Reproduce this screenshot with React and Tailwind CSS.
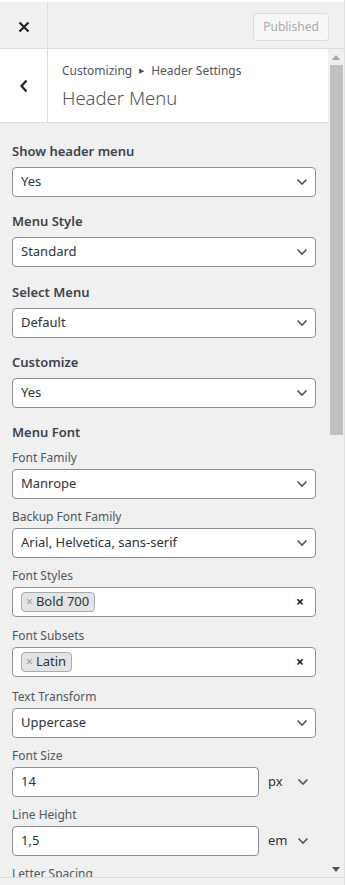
import React from "react";

const font = { fontFamily: '"Noto Sans", "Open Sans", sans-serif' };

function Chevron() {
  return (
    <svg width="12" height="8" viewBox="0 0 12 8" className="shrink-0">
      <path d="M1.5 1.5 L6 6 L10.5 1.5" fill="none" stroke="#50575e" strokeWidth="1.6" />
    </svg>
  );
}

function Select({ value }) {
  return (
    <div className="h-[30px] w-[304px] bg-white border border-[#8c8f94] rounded-[4px] flex items-center pl-[8px] pr-[7px] justify-between">
      <span className="text-[13px] text-[#2c3338]">{value}</span>
      <Chevron />
    </div>
  );
}

function BigLabel({ children, mb = "mb-[6px]" }) {
  return <div className={`h-[20px] leading-[20px] text-[13px] font-semibold text-[#3c434a] ${mb}`}>{children}</div>;
}

function SmallLabel({ children }) {
  return <div className="h-[17px] leading-[17px] text-[12px] text-[#50575e] mb-[3px]">{children}</div>;
}

function Multi({ tag }) {
  return (
    <div className="h-[30px] w-[304px] bg-white border border-[#8c8f94] rounded-[4px] flex items-center pl-[8px] pr-[11px] justify-between">
      <span className="h-[20px] flex items-center bg-[#e4e4e4] border border-[#aaaaaa] rounded-[4px] pl-[4px] pr-[5px] text-[13px] text-[#2c3338]">
        <span className="text-[#999] text-[12px] mr-[3px] leading-none">×</span>
        {tag}
      </span>
      <span className="text-[14px] font-bold text-[#222] leading-none">×</span>
    </div>
  );
}

function Unit({ value, unit }) {
  return (
    <div className="flex items-center">
      <div className="h-[30px] w-[247px] bg-white border border-[#8c8f94] rounded-[4px] flex items-center pl-[8px]">
        <span className="text-[13px] text-[#2c3338]">{value}</span>
      </div>
      <span className="ml-[9px] text-[13px] text-[#2c3338] w-[29px]">{unit}</span>
      <Chevron />
    </div>
  );
}

export default function App() {
  return (
    <div className="w-[347px] h-[885px] bg-white overflow-hidden" style={font}>
      <div className="w-[345px] h-[885px] bg-[#f0f0f1] border-r border-[#dcdcde] flex flex-col">
        {/* top bar */}
        <div className="h-[49px] shrink-0 flex border-t-[2px] border-t-white border-b border-[#dcdcde]">
          <div className="w-[48px] border-r border-[#dcdcde] flex items-center justify-center pt-[4px]">
            <svg width="12" height="12" viewBox="0 0 12 12">
              <path d="M1.5 1.5 L10.5 10.5 M10.5 1.5 L1.5 10.5" stroke="#1d2327" strokeWidth="2.2" />
            </svg>
          </div>
          <div className="flex-1 flex items-center justify-end pr-[15px] pt-[4px]">
            <div className="h-[28px] w-[76px] flex items-center justify-center rounded-[3px] border border-[#dcdcde] bg-[#f6f7f7] text-[12px] text-[#a7aaad]">
              Published
            </div>
          </div>
        </div>
        {/* body */}
        <div className="flex flex-1 min-h-0">
          <div className="flex-1 min-w-0 flex flex-col">
            <div className="h-[74px] shrink-0 bg-white border-b border-[#dcdcde] flex">
              <div className="w-[48px] border-r border-[#dcdcde] flex items-center justify-center">
                <svg width="10" height="14" viewBox="0 0 10 14">
                  <path d="M7.5 1.5 L2.5 7 L7.5 12.5" fill="none" stroke="#1d2327" strokeWidth="2.2" />
                </svg>
              </div>
              <div className="pl-[14px] pt-[12px]">
                <div className="text-[12px] leading-[20px] text-[#50575e] flex items-center">
                  Customizing
                  <span className="mx-[7px] text-[7px] text-[#50575e]">▶</span>
                  Header Settings
                </div>
                <div className="text-[18.5px] leading-[28px] font-light text-[#50575e] mt-[3px]">Header Menu</div>
              </div>
            </div>
            <div className="flex-1 min-h-0 overflow-hidden pl-[12px] pt-[18px]">
              <BigLabel>Show header menu</BigLabel>
              <Select value="Yes" />
              <div className="h-[14px]" />
              <BigLabel>Menu Style</BigLabel>
              <Select value="Standard" />
              <div className="h-[15px]" />
              <BigLabel>Select Menu</BigLabel>
              <Select value="Default" />
              <div className="h-[14px]" />
              <BigLabel>Customize</BigLabel>
              <Select value="Yes" />
              <div className="h-[14px]" />
              <BigLabel mb="mb-[7px]">Menu Font</BigLabel>
              <SmallLabel>Font Family</SmallLabel>
              <Select value="Manrope" />
              <div className="h-[9px]" />
              <SmallLabel>Backup Font Family</SmallLabel>
              <Select value="Arial, Helvetica, sans-serif" />
              <div className="h-[9px]" />
              <SmallLabel>Font Styles</SmallLabel>
              <Multi tag="Bold 700" />
              <div className="h-[10px]" />
              <SmallLabel>Font Subsets</SmallLabel>
              <Multi tag="Latin" />
              <div className="h-[11px]" />
              <SmallLabel>Text Transform</SmallLabel>
              <Select value="Uppercase" />
              <div className="h-[9px]" />
              <SmallLabel>Font Size</SmallLabel>
              <Unit value="14" unit="px" />
              <div className="h-[9px]" />
              <SmallLabel>Line Height</SmallLabel>
              <Unit value="1,5" unit="em" />
              <div className="h-[9px]" />
              <SmallLabel>Letter Spacing</SmallLabel>
            </div>
          </div>
          {/* scrollbar */}
          <div className="w-[16px] shrink-0 bg-[#f0f0f0] flex flex-col items-center">
            <div className="h-[16px] flex items-center justify-center">
              <svg width="8" height="5" viewBox="0 0 8 5"><path d="M0 5 L4 0 L8 5 Z" fill="#a3a3a3" /></svg>
            </div>
            <div className="w-[13px] h-[370px] bg-[#c1c1c1]" />
            <div className="flex-1" />
            <div className="h-[16px] flex items-center justify-center">
              <svg width="8" height="5" viewBox="0 0 8 5"><path d="M0 0 L8 0 L4 5 Z" fill="#505050" /></svg>
            </div>
          </div>
        </div>
        <div className="h-[8px] shrink-0 border-t border-[#dcdcde] bg-[#f0f0f1]" />
      </div>
    </div>
  );
}
